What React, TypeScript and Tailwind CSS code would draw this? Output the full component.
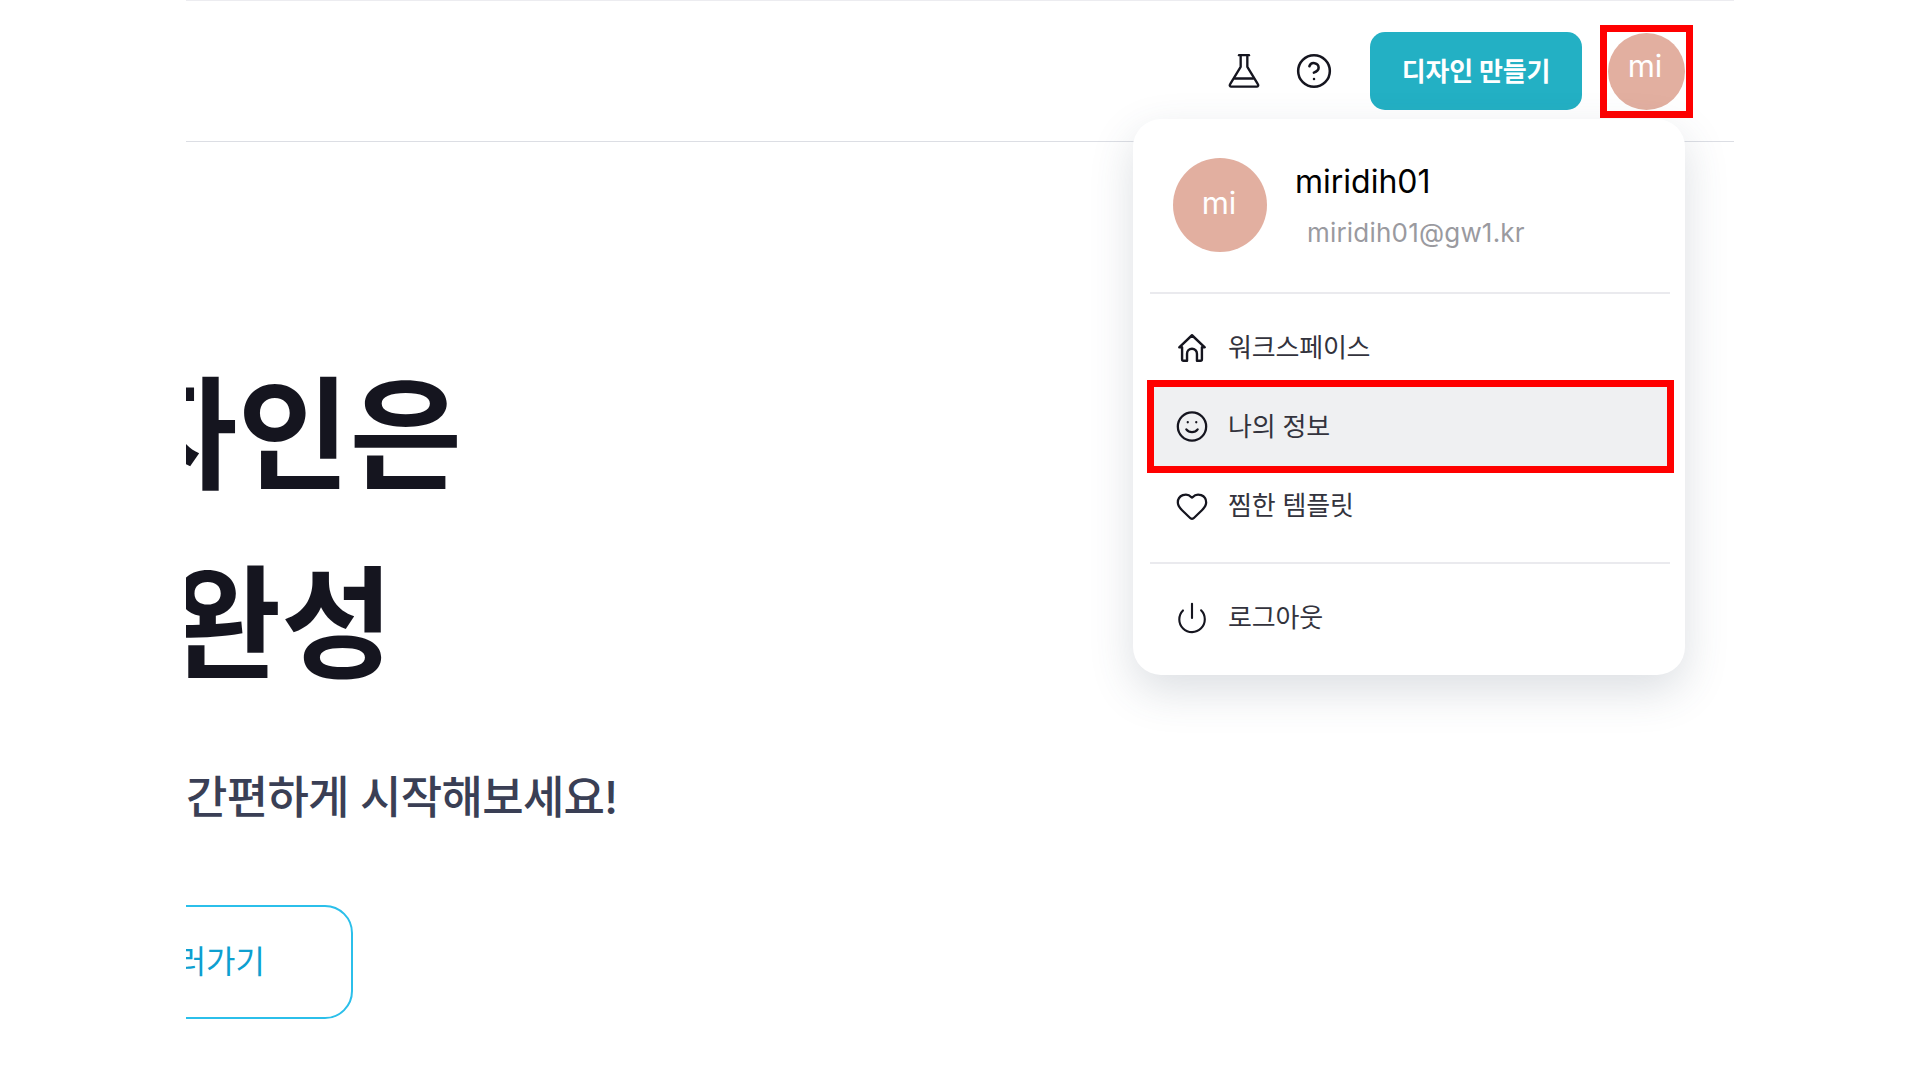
import React from "react";
import { CircleHelp, Smile, Heart, Power } from "lucide-react";

const FONT = "font-['Inter','Noto_Sans_CJK_KR',sans-serif]";

function FlaskIcon() {
  return (
    <svg viewBox="0 0 24 24" fill="none" stroke="currentColor" strokeWidth={1.4} strokeLinecap="round" strokeLinejoin="round" className="mr-[31px] h-[40px] w-[40px] text-[#15151f]">
      <path d="M9 2.5h6" />
      <path d="M10 2.5V9.5L3.6 20a.9.9 0 0 0 .8 1.4h15.2a.9.9 0 0 0 .8-1.4L14 9.5V2.5" />
      <path d="M6.4 16.5h11.2" />
    </svg>
  );
}

function HomeIcon() {
  return (
    <svg viewBox="0 0 24 24" fill="none" stroke="currentColor" strokeWidth={1.7} strokeLinejoin="round" className="h-[36px] w-[36px]">
      <path d="M3 11.5 12 3l9 8.5h-2V20a1 1 0 0 1-1 1h-2.5v-5a3.5 3.5 0 0 0-7 0v5H6a1 1 0 0 1-1-1v-8.5Z" />
    </svg>
  );
}

function MenuItem({ icon, label, active }: { icon: React.ReactNode; label: string; active?: boolean }) {
  return (
    <div className={`relative ml-[21px] mr-[18px] flex h-[79px] items-center gap-[19px] px-[21px] ${active ? "bg-[#eff0f2]" : ""}`}>
      <span className="flex w-[34px] justify-center text-[#15151f]">{icon}</span>
      <span className="text-[26px] tracking-[-0.2px] text-[#33333d]">{label}</span>
      {active && <div className="absolute -inset-[7px] border-[7px] border-[#ff0000]" />}
    </div>
  );
}

export default function App() {
  return (
    <div className={`h-screen w-full overflow-hidden bg-white ${FONT}`}>
      <div className="relative ml-[186px] h-full w-[1548px] overflow-hidden">
        <header className="flex h-[142px] items-center justify-end border-y border-t-[#ececf0] border-b-[#dcdee4] pr-[49px]">
          <FlaskIcon />
          <CircleHelp className="mr-[37px] h-[38px] w-[38px] text-[#15151f]" strokeWidth={1.6} />
          <button className="mr-[26px] flex h-[78px] w-[212px] items-center justify-center rounded-[15px] bg-[#23b0c4] text-[26px] font-bold tracking-[-0.2px] text-white">
            디자인 만들기
          </button>
          <div className="relative flex h-[77px] w-[77px] items-center justify-center rounded-full bg-[#e2afa0] pb-[9px] pr-[3px] text-[31px] text-white">
            mi
            <div className="absolute -inset-[8px] border-[7px] border-[#ff0000]" />
          </div>
        </header>

        <div className="absolute right-[49px] top-[119px] z-10 h-[556px] w-[552px] rounded-[28px] bg-white shadow-[0_16px_44px_rgba(60,75,100,0.18)]">
          <div className="flex h-[173px] items-start gap-[28px] px-[40px] pt-[39px]">
            <div className="flex h-[94px] w-[94px] shrink-0 items-center justify-center rounded-full bg-[#e2afa0] pb-[4px] pr-[2px] text-[31px] text-white">
              mi
            </div>
            <div className="pt-[1px]">
              <div className="text-[32px] leading-[46px] text-black">miridih01</div>
              <div className="mt-[5px] pl-[12px] text-[26px] leading-[46px] tracking-[0.2px] text-[#9a9a9f]">miridih01@gw1.kr</div>
            </div>
          </div>
          <div className="ml-[17px] mr-[15px] h-[2px] bg-[#eaeaee]" />
          <div className="pt-[14px]">
            <MenuItem icon={<HomeIcon />} label="워크스페이스" />
            <MenuItem icon={<Smile className="h-[35px] w-[35px]" strokeWidth={1.6} />} label="나의 정보" active />
            <MenuItem icon={<Heart className="h-[36px] w-[36px]" strokeWidth={1.6} />} label="찜한 템플릿" />
          </div>
          <div className="ml-[17px] mr-[15px] mt-[17px] h-[2px] bg-[#eaeaee]" />
          <div className="pt-[14px]">
            <MenuItem icon={<Power className="h-[36px] w-[36px]" strokeWidth={1.5} />} label="로그아웃" />
          </div>
        </div>

        <main className="pt-[198px]">
          <h1 className="-ml-[173px] whitespace-nowrap text-[122px] font-bold leading-[189px] text-[#15151f]">디자인은</h1>
          <h1 className="-ml-[17px] whitespace-nowrap text-[122px] font-bold leading-[189px] text-[#15151f]">완성</h1>
          <p className="mt-[50px] text-[45px] font-medium leading-[60px] tracking-[-0.7px] text-[#3a3f55]">간편하게 시작해보세요!</p>
          <button className="mt-[77px] -ml-[100px] flex h-[114px] w-[267px] items-center justify-end rounded-[28px] border-2 border-[#2bbfea] pr-[86px] text-[32px] text-[#0e9fd0]">
            <span className="whitespace-nowrap">보러가기</span>
          </button>
        </main>
      </div>
    </div>
  );
}
